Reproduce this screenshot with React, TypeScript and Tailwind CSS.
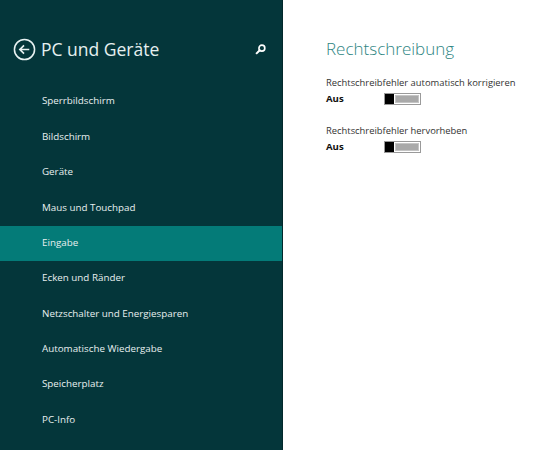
import React from 'react';

const items = [
  'Sperrbildschirm',
  'Bildschirm',
  'Geräte',
  'Maus und Touchpad',
  'Eingabe',
  'Ecken und Ränder',
  'Netzschalter und Energiesparen',
  'Automatische Wiedergabe',
  'Speicherplatz',
  'PC-Info',
];

const Toggle = () => (
  <div className="flex h-[12px] w-[37px] border border-[#9a9a9a] bg-white">
    <div className="w-[9px] bg-black" />
    <div className="m-[1px] flex-1 border border-[#c4c4c4] bg-[#a9a9a9]" />
  </div>
);

export default function App() {
  return (
    <div className="flex h-[450px] w-[540px] overflow-hidden font-['Open_Sans','Noto_Sans',sans-serif]">
      {/* Left nav */}
      <div className="flex w-[283px] shrink-0 flex-col border-r border-[#02282b] bg-[#04363a]">
        <div className="flex h-[84px] items-center pt-[14px] pl-[13px] pr-[16px]">
          <svg width="23" height="23" viewBox="0 0 24 24" fill="none" stroke="#e8f2f2" strokeWidth="1.6">
            <circle cx="12" cy="12" r="10.5" />
            <path d="M17 12H7.5M11.5 7.8 7.2 12l4.3 4.2" strokeWidth="1.8" />
          </svg>
          <span className="ml-[5px] text-[17.5px] text-[#e6f0f0]">PC und Geräte</span>
          <svg className="ml-auto" width="11" height="11" viewBox="0 0 12 12" fill="none" stroke="#ffffff" strokeWidth="1.8">
            <circle cx="7.5" cy="4.5" r="3.2" />
            <path d="M5.2 6.8 1.2 10.8" strokeWidth="2.2" />
          </svg>
        </div>
        <div className="flex flex-col">
          {items.map((it) => (
            <div
              key={it}
              className={`flex h-[35.4px] items-center pl-[42px] text-[9.8px] text-[#e8f0f0] ${
                it === 'Eingabe' ? 'bg-[#047b78]' : ''
              }`}
            >
              {it}
            </div>
          ))}
        </div>
      </div>

      {/* Right content */}
      <div className="flex-1 bg-white pl-[43px] pt-[36px]">
        <div className="text-[17px] font-light leading-[26px] text-[#2e8582]">Rechtschreibung</div>
        <div className="mt-[14px] text-[9.4px] text-[#333]">Rechtschreibfehler automatisch korrigieren</div>
        <div className="mt-[2px] flex items-center">
          <span className="w-[58px] text-[9.6px] font-bold text-[#111]">Aus</span>
          <Toggle />
        </div>
        <div className="mt-[17px] text-[9.4px] text-[#333]">Rechtschreibfehler hervorheben</div>
        <div className="mt-[2px] flex items-center">
          <span className="w-[58px] text-[9.6px] font-bold text-[#111]">Aus</span>
          <Toggle />
        </div>
      </div>
    </div>
  );
}
